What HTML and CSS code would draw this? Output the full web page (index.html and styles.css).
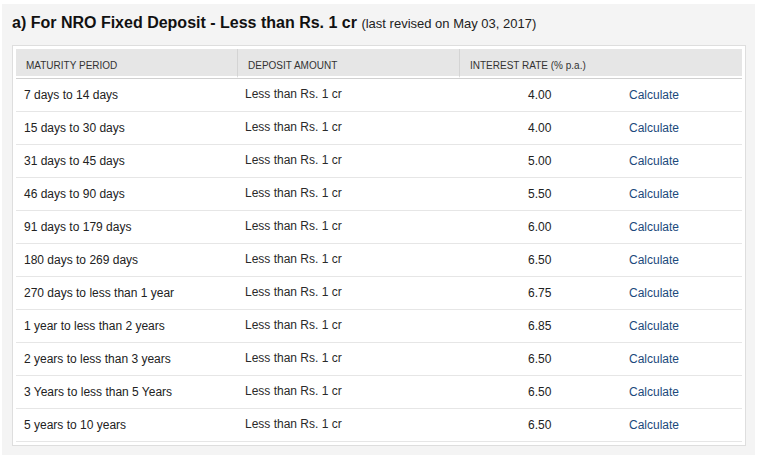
FILE: index.html
```html
<!DOCTYPE html>
<html lang="en">
<head>
<meta charset="utf-8">
<title>NRO Fixed Deposit Rates</title>
<link rel="stylesheet" href="styles.css">
</head>
<body>
<section class="panel">
  <h2 class="title">a) For NRO Fixed Deposit - Less than Rs. 1 cr <span class="revised">(last revised on May 03, 2017)</span></h2>
  <div class="card">
    <table class="rates">
      <colgroup>
        <col class="c-period">
        <col class="c-amount">
        <col class="c-rate">
        <col class="c-calc">
      </colgroup>
      <thead>
        <tr>
          <th>Maturity Period</th>
          <th class="sep">Deposit Amount</th>
          <th class="sep" colspan="2">Interest Rate <span class="pa">(% p.a.)</span></th>
        </tr>
      </thead>
      <tbody>
        <tr><td>7 days to 14 days</td><td class="amt">Less than Rs. 1 cr</td><td class="rate">4.00</td><td class="calc">Calculate</td></tr>
        <tr><td>15 days to 30 days</td><td class="amt">Less than Rs. 1 cr</td><td class="rate">4.00</td><td class="calc">Calculate</td></tr>
        <tr><td>31 days to 45 days</td><td class="amt">Less than Rs. 1 cr</td><td class="rate">5.00</td><td class="calc">Calculate</td></tr>
        <tr><td>46 days to 90 days</td><td class="amt">Less than Rs. 1 cr</td><td class="rate">5.50</td><td class="calc">Calculate</td></tr>
        <tr><td>91 days to 179 days</td><td class="amt">Less than Rs. 1 cr</td><td class="rate">6.00</td><td class="calc">Calculate</td></tr>
        <tr><td>180 days to 269 days</td><td class="amt">Less than Rs. 1 cr</td><td class="rate">6.50</td><td class="calc">Calculate</td></tr>
        <tr><td>270 days to less than 1 year</td><td class="amt">Less than Rs. 1 cr</td><td class="rate">6.75</td><td class="calc">Calculate</td></tr>
        <tr><td>1 year to less than 2 years</td><td class="amt">Less than Rs. 1 cr</td><td class="rate">6.85</td><td class="calc">Calculate</td></tr>
        <tr><td>2 years to less than 3 years</td><td class="amt">Less than Rs. 1 cr</td><td class="rate">6.50</td><td class="calc">Calculate</td></tr>
        <tr><td>3 Years to less than 5 Years</td><td class="amt">Less than Rs. 1 cr</td><td class="rate">6.50</td><td class="calc">Calculate</td></tr>
        <tr><td>5 years to 10 years</td><td class="amt">Less than Rs. 1 cr</td><td class="rate">6.50</td><td class="calc">Calculate</td></tr>
      </tbody>
    </table>
  </div>
</section>
</body>
</html>
```
FILE: styles.css
```css
html, body {
  margin: 0;
  padding: 0;
  background: #ffffff;
}
body {
  padding: 4px 0 0 2px;
  font-family: "Liberation Sans", Arial, sans-serif;
  color: #222222;
}
.panel {
  width: 753px;
  height: 451px;
  box-sizing: border-box;
  background: #f4f4f4;
  padding: 9px 9px 0 10px;
}
.title {
  margin: 0 0 11px 0;
  font-size: 16px;
  line-height: 20px;
  font-weight: bold;
  color: #111111;
}
.revised {
  font-size: 13px;
  font-weight: normal;
  color: #222222;
}
.card {
  width: 734px;
  box-sizing: border-box;
  background: #ffffff;
  border: 1px solid #dedede;
  padding: 3px;
}
.rates {
  width: 726px;
  table-layout: fixed;
  border-collapse: separate;
  border-spacing: 0;
}
.c-period { width: 221px; }
.c-amount { width: 222px; }
.c-rate { width: 160px; }
.c-calc { width: 123px; }
.rates th {
  background: #e6e6e6;
  text-align: left;
  font-weight: normal;
  text-transform: uppercase;
  font-size: 10px;
  line-height: 14px;
  color: #333333;
  padding: 10px 10px 3px 10px;
  border-bottom: 2px solid #ffffff;
}
.rates th.sep {
  border-left: 1px solid #d4d4d4;
}
.rates th .pa {
  text-transform: none;
}
.rates td {
  height: 33px;
  box-sizing: border-box;
  padding: 0 0 0 8px;
  font-size: 12px;
  line-height: 14px;
  vertical-align: middle;
  border-bottom: 1px solid #e6e6e6;
  white-space: nowrap;
  color: #222222;
}
.rates tbody tr:first-child td {
  height: 34px;
  border-top: 1px solid #d0d0d0;
}
.rates td.amt {
  padding-bottom: 3px;
  color: #2a2a2a;
}
.rates td.rate {
  padding-left: 69px;
}
.rates td.calc {
  padding-left: 10px;
  color: #1c4a7c;
}
```
